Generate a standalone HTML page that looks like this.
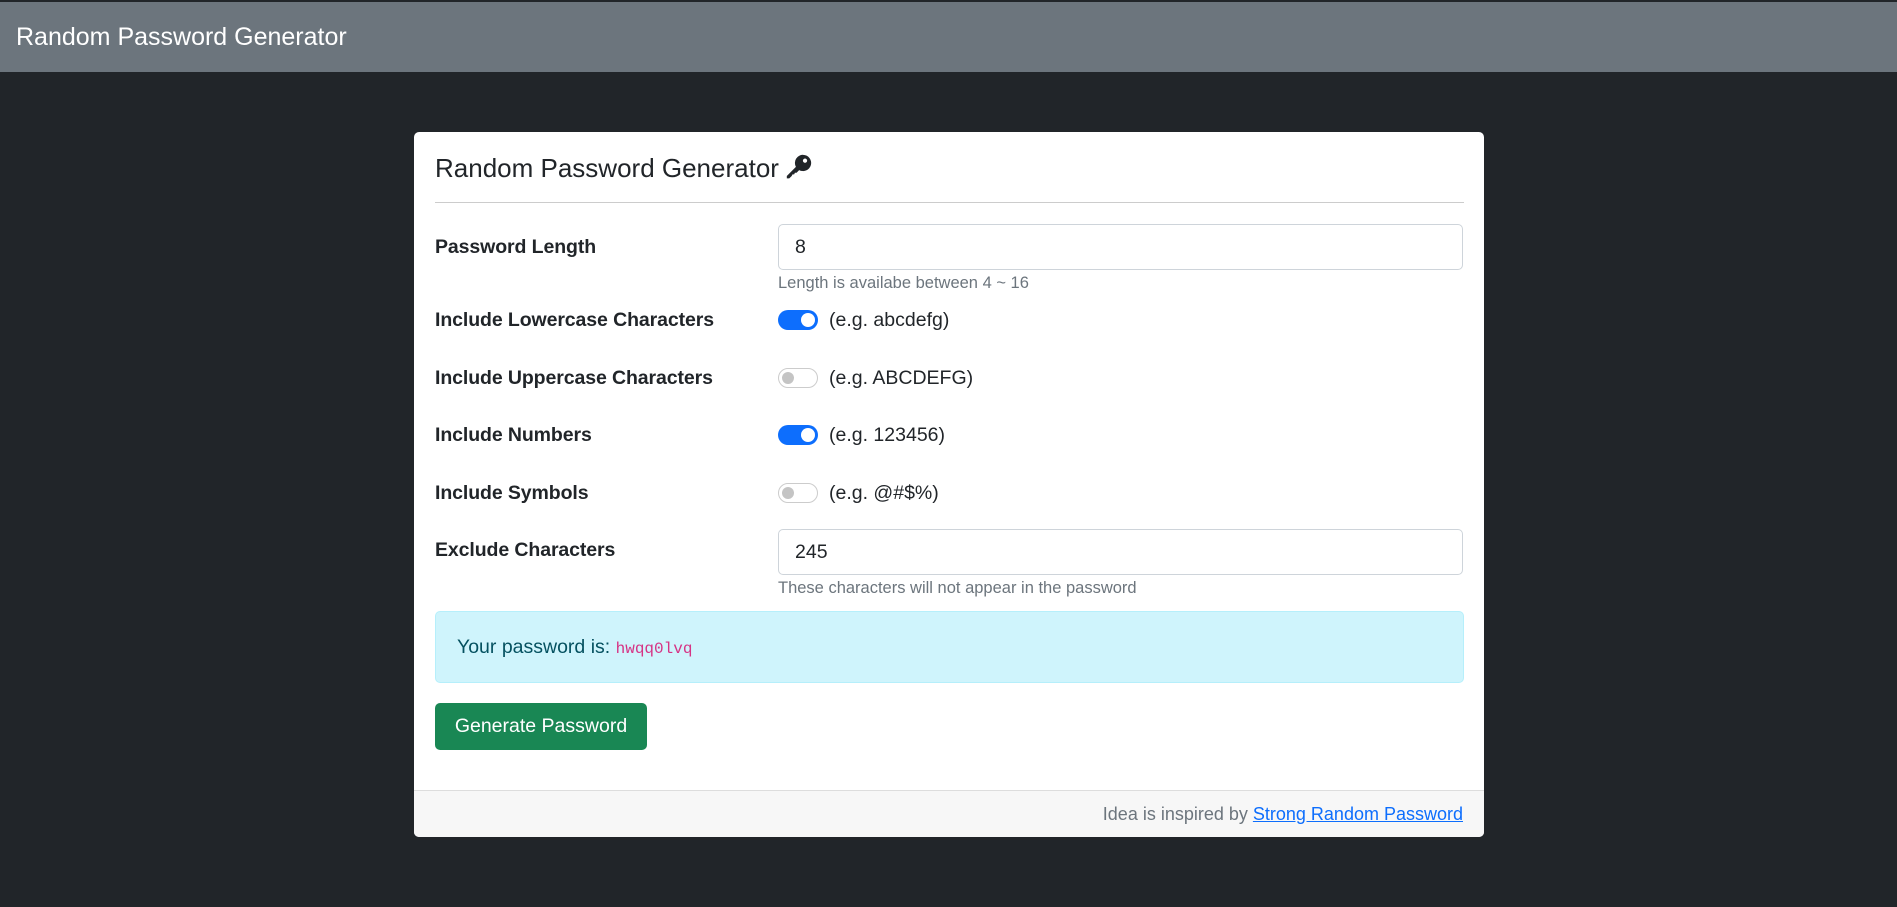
<!DOCTYPE html>
<html><head><meta charset="utf-8"><style>
*{box-sizing:border-box;margin:0;padding:0}
body{width:1897px;height:907px;background:#212529;font-family:"Liberation Sans",sans-serif;color:#212529;position:relative;overflow:hidden}
.hdr{position:absolute;top:2px;left:0;width:1897px;height:70px;background:#6c757d;color:#fff;font-size:25px;line-height:70px;padding-left:16px}
.card{position:absolute;left:414px;top:132px;width:1070px;height:705px;background:#fff;border-radius:5px;overflow:hidden}
.abs{position:absolute}
.title{left:21px;top:20px;font-size:26px;line-height:32px}
.hr{left:21px;top:70px;width:1029px;height:1px;background:#ccc}
.lbl{left:21px;font-size:19.5px;font-weight:bold;letter-spacing:-0.1px}
.inp{left:364px;width:685px;height:46px;border:1px solid #ced4da;border-radius:5px;font-size:19.5px;line-height:44px;padding-left:16px}
.help{left:364px;font-size:16.5px;color:#6c757d}
.tg{left:364px;width:40px;height:20px;border-radius:10px}
.on{background:#0d6efd}
.on::after{content:"";position:absolute;right:3px;top:3px;width:14px;height:14px;border-radius:50%;background:#fff}
.off{border:1px solid #ccc;background:#fff}
.off::after{content:"";position:absolute;left:3px;top:3px;width:12px;height:12px;border-radius:50%;background:#c4c4c4}
.ex{left:415px;font-size:19.5px}
.alert{left:21px;top:479px;width:1029px;height:72px;background:#cff4fc;border:1px solid #b6effb;border-radius:5px;color:#055160;font-size:19.5px;line-height:70px;padding-left:21px}
.alert code{font-family:"Liberation Mono",monospace;color:#d63384;font-size:16px}
.btn{left:21px;top:571px;width:212px;height:47px;background:#198754;border-radius:5px;color:#fff;font-size:19.5px;line-height:47px;text-align:center}
.ft{left:0;top:658px;width:1070px;height:47px;background:#f7f7f7;border-top:1px solid #ddd;text-align:right;padding-right:21px;font-size:18px;line-height:47px;color:#6c757d}
.ft a{color:#0d6efd;text-decoration:underline}
</style></head><body>
<div class="hdr">Random Password Generator</div>
<div class="card">
<div class="abs title">Random Password Generator <svg width="26" height="26" viewBox="0 0 16 16" style="vertical-align:-3px"><path fill="#212529" d="M10.5 0.5a5 5 0 1 1-2.4 9.4L6.5 11.5l-1 0-0.5 1-1 0-0.5 1-1.5 1.5-1.5 0 0-1.5 5.6-5.6A5 5 0 0 1 10.5 0.5zm1.2 2.3a1.3 1.3 0 1 0 0.01 0z"/></svg></div>
<div class="abs hr"></div>
<div class="abs lbl" style="top:104px">Password Length</div>
<div class="abs inp" style="top:92px">8</div>
<div class="abs help" style="top:142px">Length is availabe between 4 ~ 16</div>
<div class="abs lbl" style="top:177px">Include Lowercase Characters</div>
<div class="abs tg on" style="top:178px"></div><div class="abs ex" style="top:177px">(e.g. abcdefg)</div>
<div class="abs lbl" style="top:235px">Include Uppercase Characters</div>
<div class="abs tg off" style="top:236px"></div><div class="abs ex" style="top:235px">(e.g. ABCDEFG)</div>
<div class="abs lbl" style="top:292px">Include Numbers</div>
<div class="abs tg on" style="top:293px"></div><div class="abs ex" style="top:292px">(e.g. 123456)</div>
<div class="abs lbl" style="top:350px">Include Symbols</div>
<div class="abs tg off" style="top:351px"></div><div class="abs ex" style="top:350px">(e.g. @#$%)</div>
<div class="abs lbl" style="top:407px">Exclude Characters</div>
<div class="abs inp" style="top:397px">245</div>
<div class="abs help" style="top:447px">These characters will not appear in the password</div>
<div class="abs alert">Your password is: <code>hwqq0lvq</code></div>
<div class="abs btn">Generate Password</div>
<div class="abs ft">Idea is inspired by <a>Strong Random Password</a></div>
</div>
</body></html>
